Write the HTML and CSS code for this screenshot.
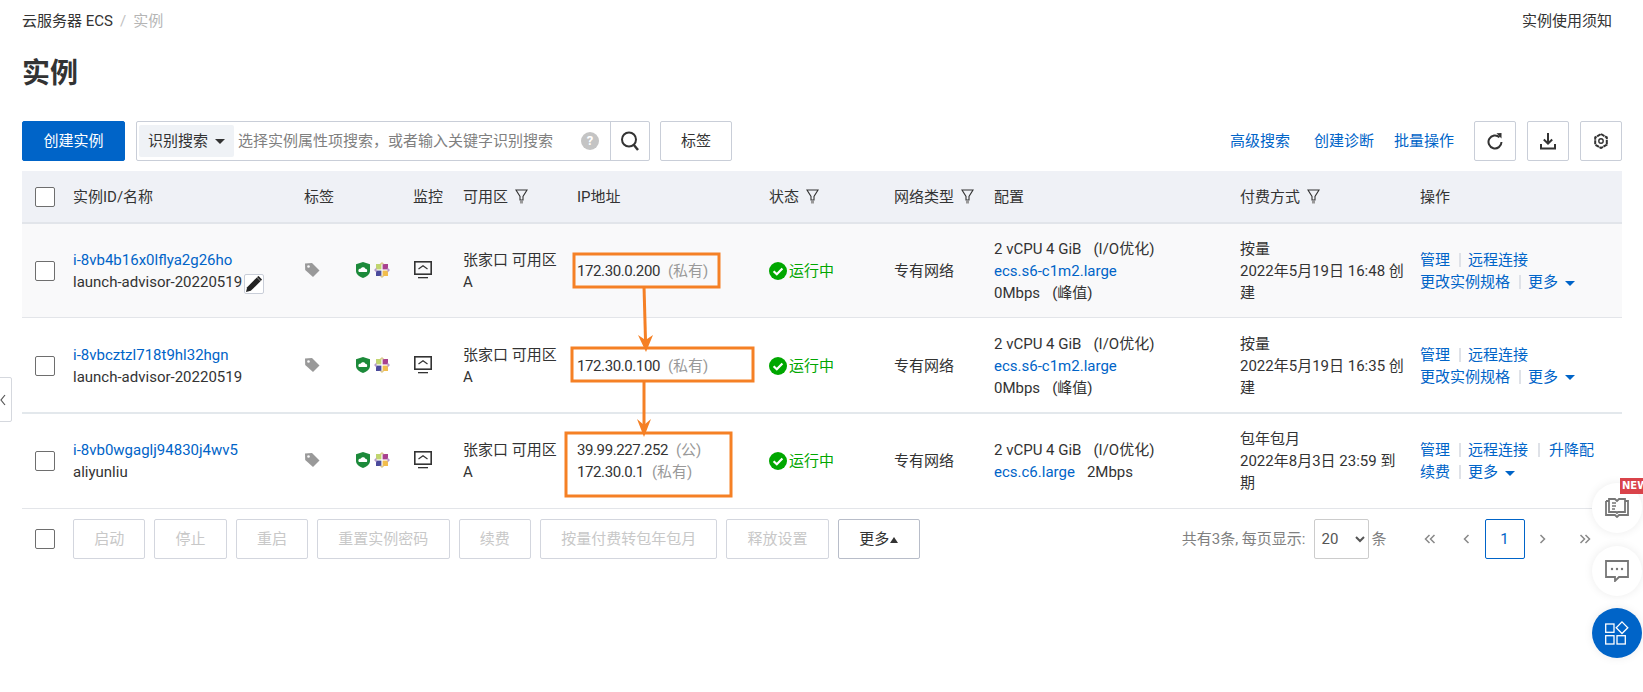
FILE: index.html
```html
<!DOCTYPE html>
<html lang="zh-CN">
<head>
    <meta charset="utf-8">
    <title>实例</title>
    <link rel="stylesheet" href="styles.css">
</head>
<body>

    <svg class="defs" width="0" height="0">
        <symbol id="i-filter" viewBox="0 0 13 15">
            <path d="M1 1h11L8 7.500V11H5V7.500z" fill="none" stroke="#333" stroke-width="1.100"/>
            <rect x="5" y="12" width="3" height="2.500" fill="#999"/>
        </symbol>
        <symbol id="i-tag" viewBox="0 0 16 16">
            <path d="M1 1.500 8 1 15.500 8.500 9 15 1.200 8z" fill="#999"/>
            <circle cx="4.500" cy="4.500" r="1.300" fill="#f9f9fa"/>
        </symbol>
        <symbol id="i-shield" viewBox="0 0 14 16">
            <path d="M7 0 14 2.300V9c0 3.500-4 6-7 7-3-1-7-3.500-7-7V2.300z" fill="#1c8a3a"/>
            <path d="M3 10c-1.400-1.700 0-3.500 1.500-3.200C5.200 5 8.500 4.500 9.300 6.700c1.700-.1 2.500 2 1.500 3.300z" fill="#fff"/>
        </symbol>
        <symbol id="i-centos" viewBox="0 0 16 16">
            <rect x="2" y="2" width="5.400" height="5.400" fill="#c2d66f"/>
            <rect x="8.600" y="2" width="5.400" height="5.400" fill="#a8418f"/>
            <rect x="2" y="8.600" width="5.400" height="5.400" fill="#4a4a9c"/>
            <rect x="8.600" y="8.600" width="5.400" height="5.400" fill="#f2bd4c"/>
            <path d="M0 8 2.500 5.500V10.500zM16 8 13.500 5.500V10.500z" fill="#b59ac9"/>
            <path d="M8 16 5.500 13.700H10.500zM8 0 5.500 2.300H10.500z" fill="#dcc98f"/>
        </symbol>
        <symbol id="i-monitor" viewBox="0 0 18 18">
            <rect x=".8" y=".8" width="16.400" height="12.400" fill="none" stroke="#333" stroke-width="1.600"/>
            <path d="M4.500 8 9 4.800 13.500 8" fill="none" stroke="#333" stroke-width="1.200"/>
            <rect x="4" y="16" width="10" height="1.300" fill="#333"/>
        </symbol>
        <symbol id="i-ok" viewBox="0 0 18 18">
            <circle cx="9" cy="9" r="9" fill="#00a700"/>
            <path d="M4.600 9.200 7.800 12.300 13.400 6.500" fill="none" stroke="#fff" stroke-width="2.200"/>
        </symbol>
    </svg>

    <div class="page">

        <div class="crumbs">
            <div><a class="crumb" href="#">云服务器 ECS</a><span class="crumb-sep">/</span><span class="crumb-now">实例</span></div>
            <a class="crumb" href="#">实例使用须知</a>
        </div>

        <h1 class="title">实例</h1>

        <div class="toolbar">
            <button class="btn btn-primary">创建实例</button>
            <div class="search">
                <span class="search-type">识别搜索<i class="caret caret-dark"></i></span>
                <input class="search-input" type="text" placeholder="选择实例属性项搜索，或者输入关键字识别搜索">
                <span class="help">?</span>
                <span class="search-go">
                    <svg width="22" height="22" viewBox="0 0 22 22"><circle cx="10" cy="9.500" r="7" fill="none" stroke="#333" stroke-width="2"/><path d="M14.500 14.500 19 20" stroke="#333" stroke-width="2.400"/></svg>
                </span>
            </div>
            <button class="btn btn-tag">标签</button>
            <div class="toolbar-right">
                <a href="#" class="tool-link">高级搜索</a>
                <a href="#" class="tool-link tool-link-near">创建诊断</a>
                <a href="#" class="tool-link">批量操作</a>
                <button class="btn btn-icon"><svg width="16" height="18" viewBox="0 0 16 18"><path d="M12.500 5.200A6.500 6.500 0 1 0 14.500 10" fill="none" stroke="#333" stroke-width="2"/><path d="M9.500 1.200 14.500 1v5.500z" fill="#333"/></svg></button>
                <button class="btn btn-icon"><svg width="16" height="18" viewBox="0 0 16 18"><path d="M8 1v10M3.800 7.500 8 11.500 12.200 7.500" fill="none" stroke="#333" stroke-width="2"/><path d="M1 12v4.500h14V12" fill="none" stroke="#333" stroke-width="2"/></svg></button>
                <button class="btn btn-icon"><svg width="14" height="16" viewBox="0 0 14 16"><path d="M7 1 12.800 4.400V11.600L7 15 1.200 11.600V4.400z" fill="none" stroke="#333" stroke-width="2" stroke-dasharray="4 .6"/><circle cx="7" cy="8" r="2.200" fill="none" stroke="#333" stroke-width="1.400"/></svg></button>
            </div>
        </div>

        <table class="grid">
            <colgroup>
                <col class="c-check"><col class="c-id"><col class="c-tag"><col class="c-mon"><col class="c-zone"><col class="c-ip">
                <col class="c-status"><col class="c-net"><col class="c-conf"><col class="c-pay"><col class="c-ops">
            </colgroup>
            <thead>
                <tr>
                    <th><span class="check"></span></th>
                    <th>实例ID/名称</th>
                    <th>标签</th>
                    <th>监控</th>
                    <th>可用区<svg class="filter"><use href="#i-filter"/></svg></th>
                    <th>IP地址</th>
                    <th>状态<svg class="filter"><use href="#i-filter"/></svg></th>
                    <th>网络类型<svg class="filter"><use href="#i-filter"/></svg></th>
                    <th>配置</th>
                    <th>付费方式<svg class="filter"><use href="#i-filter"/></svg></th>
                    <th>操作</th>
                </tr>
            </thead>
            <tbody>
                <tr class="row-hover">
                    <td><span class="check"></span></td>
                    <td>
                        <a href="#">i-8vb4b16x0lflya2g26ho</a><br>
                        <span class="inst-name">launch-advisor-20220519</span><span class="edit"><svg width="16" height="16" viewBox="0 0 14 14"><path d="M0 14 1 9.800 9.500 1.300 12.700 4.500 4.200 13z" fill="#222"/><path d="M10.500.3 11 0 14 3l-.3.500-.8.800-3.200-3.200z" fill="#222"/></svg></span>
                    </td>
                    <td><div class="icons"><svg class="ico-tag"><use href="#i-tag"/></svg><svg class="ico-shield"><use href="#i-shield"/></svg><svg class="ico-os"><use href="#i-centos"/></svg></div></td>
                    <td><svg class="ico-mon"><use href="#i-monitor"/></svg></td>
                    <td class="wrap-zone">张家口 可用区 A</td>
                    <td><span class="ip">172.30.0.200</span><span class="ip-kind">(私有)</span></td>
                    <td><span class="status"><svg class="ico-ok"><use href="#i-ok"/></svg>运行中</span></td>
                    <td>专有网络</td>
                    <td>2 vCPU 4 GiB<span class="gap"></span>(I/O优化)<br><a href="#">ecs.s6-c1m2.large</a><br>0Mbps<span class="gap"></span>(峰值)</td>
                    <td class="wrap-pay">按量<br>2022年5月19日 16:48 创建</td>
                    <td class="ops"><a href="#">管理</a><i class="sep"></i><a href="#">远程连接</a><br><a href="#">更改实例规格</a><i class="sep"></i><a href="#">更多<i class="caret"></i></a></td>
                </tr>
                <tr class="row-thick">
                    <td><span class="check"></span></td>
                    <td>
                        <a href="#">i-8vbcztzl718t9hl32hgn</a><br>
                        <span class="inst-name">launch-advisor-20220519</span>
                    </td>
                    <td><div class="icons"><svg class="ico-tag"><use href="#i-tag"/></svg><svg class="ico-shield"><use href="#i-shield"/></svg><svg class="ico-os"><use href="#i-centos"/></svg></div></td>
                    <td><svg class="ico-mon"><use href="#i-monitor"/></svg></td>
                    <td class="wrap-zone">张家口 可用区 A</td>
                    <td><span class="ip">172.30.0.100</span><span class="ip-kind">(私有)</span></td>
                    <td><span class="status"><svg class="ico-ok"><use href="#i-ok"/></svg>运行中</span></td>
                    <td>专有网络</td>
                    <td>2 vCPU 4 GiB<span class="gap"></span>(I/O优化)<br><a href="#">ecs.s6-c1m2.large</a><br>0Mbps<span class="gap"></span>(峰值)</td>
                    <td class="wrap-pay">按量<br>2022年5月19日 16:35 创建</td>
                    <td class="ops"><a href="#">管理</a><i class="sep"></i><a href="#">远程连接</a><br><a href="#">更改实例规格</a><i class="sep"></i><a href="#">更多<i class="caret"></i></a></td>
                </tr>
                <tr>
                    <td><span class="check"></span></td>
                    <td>
                        <a href="#">i-8vb0wgaglj94830j4wv5</a><br>
                        <span class="inst-name">aliyunliu</span>
                    </td>
                    <td><div class="icons"><svg class="ico-tag"><use href="#i-tag"/></svg><svg class="ico-shield"><use href="#i-shield"/></svg><svg class="ico-os"><use href="#i-centos"/></svg></div></td>
                    <td><svg class="ico-mon"><use href="#i-monitor"/></svg></td>
                    <td class="wrap-zone">张家口 可用区 A</td>
                    <td><span class="ip">39.99.227.252</span><span class="ip-kind">(公)</span><br><span class="ip">172.30.0.1</span><span class="ip-kind">(私有)</span></td>
                    <td><span class="status"><svg class="ico-ok"><use href="#i-ok"/></svg>运行中</span></td>
                    <td>专有网络</td>
                    <td>2 vCPU 4 GiB<span class="gap"></span>(I/O优化)<br><a href="#">ecs.c6.large</a><span class="gap-small"></span>2Mbps</td>
                    <td class="wrap-pay">包年包月<br>2022年8月3日 23:59 到期</td>
                    <td class="ops"><a href="#">管理</a><i class="sep"></i><a href="#">远程连接</a><i class="sep sep-wide"></i><a href="#">升降配</a><br><a href="#">续费</a><i class="sep"></i><a href="#">更多<i class="caret"></i></a></td>
                </tr>
            </tbody>
        </table>

        <div class="footer">
            <span class="check"></span>
            <div class="actions">
                <button class="btn btn-off">启动</button>
                <button class="btn btn-off">停止</button>
                <button class="btn btn-off">重启</button>
                <button class="btn btn-off">重置实例密码</button>
                <button class="btn btn-off">续费</button>
                <button class="btn btn-off">按量付费转包年包月</button>
                <button class="btn btn-off">释放设置</button>
                <button class="btn btn-more">更多<i class="caret-up"></i></button>
            </div>
            <div class="pager">
                <span class="pager-info">共有3条, 每页显示:</span>
                <select class="pager-size"><option>20</option></select>
                <span class="pager-info">条</span>
                <div class="pages">
                    <span class="page-nav"><svg width="12" height="10" viewBox="0 0 12 10"><path d="M5.500 1 1.500 5 5.500 9M10.500 1 6.500 5 10.500 9" fill="none" stroke="#888" stroke-width="1.500"/></svg></span>
                    <span class="page-nav"><svg width="7" height="10" viewBox="0 0 7 10"><path d="M5.500 1 1.500 5 5.500 9" fill="none" stroke="#888" stroke-width="1.500"/></svg></span>
                    <span class="page-cur">1</span>
                    <span class="page-nav"><svg width="7" height="10" viewBox="0 0 7 10"><path d="M1.500 1 5.500 5 1.500 9" fill="none" stroke="#888" stroke-width="1.500"/></svg></span>
                    <span class="page-nav page-last"><svg width="12" height="10" viewBox="0 0 12 10"><path d="M1.500 1 5.500 5 1.500 9M6.500 1 10.500 5 6.500 9" fill="none" stroke="#888" stroke-width="1.500"/></svg></span>
                </div>
            </div>
        </div>
    </div>

    <!-- orange marks drawn over the table -->
    <svg class="marks" width="1643" height="692" viewBox="0 0 1643 692">
        <g fill="none" stroke="#f58025" stroke-width="3">
            <rect x="574" y="254" width="145" height="33"/>
            <rect x="572" y="348" width="181" height="33"/>
            <rect x="566" y="433" width="165" height="63"/>
            <path d="M644 286 645.500 340"/>
            <path d="M644 382V425"/>
        </g>
        <path d="M638 335 645.500 340 653 335 646 352z" fill="#f58025"/>
        <path d="M637 419 644 425 651 419 644 437z" fill="#f58025"/>
    </svg>

    <div class="side-tab">
        <svg width="6" height="12" viewBox="0 0 6 12"><path d="M5 1 1 6 5 11" fill="none" stroke="#555" stroke-width="1.200"/></svg>
    </div>

    <div class="float float-book">
        <svg width="24" height="20" viewBox="0 0 24 20"><path d="M1 3h3M1 3v14h9l2 2 2-2h9V3h-3" fill="none" stroke="#777" stroke-width="1.800"/><path d="M4 1h6l2 2 2-2h6v13h-7l-1 1-1-1H4z" fill="none" stroke="#777" stroke-width="1.800"/><path d="M7 5h4M7 8h4M7 11h3" stroke="#777" stroke-width="1.500"/></svg>
        <span class="badge-new">NEW</span>
    </div>
    <div class="float float-chat">
        <svg width="24" height="22" viewBox="0 0 24 22"><path d="M1 1h22v16h-9l-4 4v-4H1z" fill="none" stroke="#777" stroke-width="1.800"/><circle cx="7" cy="9" r="1.200" fill="#777"/><circle cx="12" cy="9" r="1.200" fill="#777"/><circle cx="17" cy="9" r="1.200" fill="#777"/></svg>
    </div>
    <div class="float float-apps">
        <svg width="24" height="24" viewBox="0 0 24 24"><g fill="none" stroke="#fff" stroke-width="1.300"><rect x=".7" y="3" width="8.300" height="8.300"/><rect x=".7" y="14.700" width="8.300" height="8.300"/><rect x="12" y="14.700" width="8.300" height="8.300"/><path d="M17 .9 22.800 6.700 17 12.500 11.200 6.700z"/></g></svg>
    </div>

</body>
</html>
```

FILE: styles.css
```css
html, body {
    margin: 0;
    height: 100%;
    overflow: hidden;
    background: #fff;
}
body {
    position: relative;
    font-family: Roboto, "Noto Sans CJK SC", sans-serif;
    font-size: 15px;
    line-height: 22px;
    color: #333;
}
a {
    color: #0064c8;
    text-decoration: none;
}
.defs {
    position: absolute;
}
.page {
    width: 1600px;
    margin-left: 22px;
    padding-top: 10px;
}

/* header */
.crumbs {
    display: flex;
    justify-content: space-between;
    padding-right: 10px;
}
.crumb {
    color: #333;
}
.crumb-sep {
    margin: 0 7px;
    color: #c1c1c1;
}
.crumb-now {
    color: #b5b5b5;
}
.title {
    margin: 22px 0 27px;
    font-size: 28px;
    line-height: 40px;
    font-weight: 700;
}

/* buttons */
.btn {
    height: 40px;
    padding: 0 20.2px;
    border: 1px solid #c9ced8;
    border-radius: 2px;
    background: #fff;
    font: inherit;
    color: #333;
}
.btn-primary {
    width: 103px;
    padding: 0;
    border-color: #0064c8;
    background: #0064c8;
    color: #fff;
}
.btn-tag {
    width: 72px;
    padding: 0;
    margin-left: 10px;
}
.btn-icon {
    display: flex;
    align-items: center;
    justify-content: center;
    width: 42px;
    padding: 0;
    margin-left: 11px;
}
.btn-off {
    color: #c8c8c8;
    border-color: #d3d6de;
}
.btn-more {
    width: 82px;
    padding: 0;
    border-color: #b8bdc9;
}

/* toolbar */
.toolbar {
    display: flex;
    align-items: center;
    height: 40px;
}
.search {
    display: flex;
    align-items: center;
    box-sizing: border-box;
    width: 514px;
    height: 40px;
    margin-left: 11px;
    padding-left: 2px;
    border: 1px solid #c9ced8;
    border-radius: 2px;
}
.search-type {
    display: flex;
    align-items: center;
    flex: none;
    width: 95px;
    height: 32px;
    padding-left: 9px;
    box-sizing: border-box;
    border-radius: 2px;
    background: #eff2f6;
}
.search-input {
    flex: 1;
    min-width: 0;
    padding: 0 0 0 4px;
    border: 0;
    outline: none;
    background: none;
    font: inherit;
}
.search-input::placeholder {
    color: #808080;
}
.help {
    flex: none;
    width: 18px;
    height: 18px;
    margin-right: 11px;
    border-radius: 50%;
    background: #c4c4c4;
    color: #fff;
    font-size: 13px;
    font-weight: 700;
    line-height: 18px;
    text-align: center;
}
.search-go {
    display: flex;
    align-items: center;
    justify-content: center;
    flex: none;
    width: 38px;
    height: 38px;
    border-left: 1px solid #c9ced8;
}
.toolbar-right {
    display: flex;
    align-items: center;
    margin-left: auto;
}
.tool-link {
    margin-right: 24px;
}
.tool-link-near {
    margin-right: 20px;
}
.tool-link + .btn-icon {
    margin-left: -4px;
}
.caret {
    display: inline-block;
    margin-left: 7px;
    vertical-align: middle;
    border: 5px solid transparent;
    border-top-color: #0064c8;
    border-bottom-width: 0;
}
.caret-dark {
    border-top-color: #333;
}
.caret-up {
    display: inline-block;
    margin-left: 1px;
    vertical-align: middle;
    border: 4px solid transparent;
    border-bottom: 6px solid #333;
    border-top-width: 0;
}

/* table */
.grid {
    width: 1600px;
    margin-top: 10px;
    border-collapse: collapse;
    table-layout: fixed;
}
.c-check { width: 51px; }
.c-id { width: 231px; }
.c-tag { width: 109px; }
.c-mon { width: 50px; }
.c-zone { width: 114px; }
.c-ip { width: 192px; }
.c-status { width: 125px; }
.c-net { width: 100px; }
.c-conf { width: 246px; }
.c-pay { width: 180px; }
.c-ops { width: 202px; }
.grid th {
    height: 51px;
    padding: 0;
    border-bottom: 2px solid #e2e5ea;
    background: #eff1f6;
    font-weight: 400;
    text-align: left;
    white-space: nowrap;
}
.grid td {
    height: 94px;
    padding: 0;
    border-bottom: 1px solid #e3e5e9;
    vertical-align: middle;
}
.grid .row-hover td {
    height: 92px;
    padding-top: 1px;
    background: #f9f9fa;
}
.grid .row-thick td {
    height: 93px;
    padding-top: 1px;
    border-bottom: 2px solid #e3e8ec;
}
.grid .wrap-zone {
    padding-right: 16px;
}
.grid .wrap-pay {
    padding-right: 12px;
}
.check {
    display: block;
    box-sizing: border-box;
    width: 20px;
    height: 20px;
    margin-left: 13px;
    border: 1px solid #6e6e6e;
    border-radius: 2px;
    background: #fff;
}
.filter {
    width: 13px;
    height: 15px;
    margin-left: 7px;
    vertical-align: -2px;
}
.inst-name {
    white-space: nowrap;
}
.edit {
    display: inline-flex;
    align-items: center;
    justify-content: center;
    box-sizing: border-box;
    width: 20px;
    height: 20px;
    margin-left: 2px;
    border: 1px solid #c9ced8;
    border-radius: 2px;
    background: #fff;
    vertical-align: -5px;
}
.icons {
    display: flex;
    align-items: center;
    margin-top: -2px;
}
.ico-tag {
    width: 16px;
    height: 16px;
}
.ico-shield {
    width: 14px;
    height: 16px;
    margin-left: 36px;
}
.ico-os {
    width: 16px;
    height: 16px;
    margin-left: 4px;
}
.ico-mon {
    display: block;
    width: 18px;
    height: 18px;
    margin: -2px 0 0 1px;
}
.ip {
    letter-spacing: -0.4px;
}
.ip-kind {
    margin-left: 8px;
    color: #999;
}
.status {
    display: flex;
    align-items: center;
    color: #00a700;
}
.ico-ok {
    width: 18px;
    height: 18px;
    margin-right: 2px;
}
.gap {
    display: inline-block;
    width: 12px;
}
.gap-small {
    display: inline-block;
    width: 12px;
}
.ops {
    white-space: nowrap;
}
.sep {
    display: inline-block;
    width: 2px;
    height: 14px;
    margin: 0 7px 0 9px;
    background: #dfe2e8;
    vertical-align: -2px;
}
.sep-wide {
    margin: 0 9px 0 10px;
}

/* footer */
.footer {
    display: flex;
    align-items: center;
    margin-top: 10px;
}
.actions {
    display: flex;
    gap: 9px;
    margin-left: 18px;
}
.pager {
    display: flex;
    align-items: center;
    margin-left: auto;
    padding-right: 13px;
}
.pager-info {
    color: #808080;
}
.pager-size {
    width: 55px;
    height: 40px;
    margin: 0 2px 0 9px;
    padding-left: 2px;
    border: 1px solid #ccc;
    border-radius: 2px;
    background: #fff;
    font: inherit;
    color: #555;
}
.pages {
    display: flex;
    align-items: center;
    margin-left: 25px;
}
.page-nav {
    display: flex;
    align-items: center;
    justify-content: center;
    width: 36.5px;
    height: 40px;
}
.page-last {
    width: 48px;
}
.page-cur {
    box-sizing: border-box;
    width: 40px;
    height: 40px;
    border: 1px solid #0064c8;
    border-radius: 2px;
    color: #0064c8;
    line-height: 38px;
    text-align: center;
}

/* things lying over the page */
.marks {
    position: absolute;
    left: 0;
    top: 0;
    pointer-events: none;
}
.side-tab {
    position: absolute;
    left: -1px;
    top: 377px;
    display: flex;
    align-items: center;
    box-sizing: border-box;
    width: 13px;
    height: 45px;
    border: 1px solid #d5d8de;
    border-radius: 0 2px 2px 0;
    background: #fff;
}
.float {
    position: absolute;
    left: 1592px;
    display: flex;
    align-items: center;
    justify-content: center;
    width: 50px;
    height: 50px;
    border-radius: 50%;
    background: #fff;
    box-shadow: 0 0 10px rgba(0,0,0,0.08);
}
.float-book {
    top: 483px;
}
.float-chat {
    top: 546px;
}
.float-apps {
    top: 608px;
    background: #0064c8;
}
.badge-new {
    position: absolute;
    left: 28px;
    top: -5px;
    width: 28px;
    height: 16px;
    padding-left: 2px;
    background: #d9434a;
    color: #fff;
    font-family: "DejaVu Sans", sans-serif;
    font-size: 10px;
    font-weight: 700;
    line-height: 16px;
}
```
